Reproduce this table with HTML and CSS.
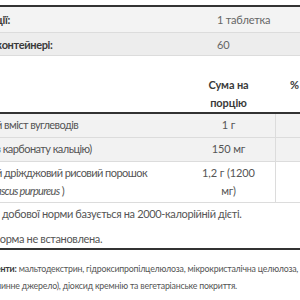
FILE: index.html
```html
<!DOCTYPE html>
<html lang="uk">
<head>
<meta charset="utf-8">
<link rel="stylesheet" href="styles.css">
</head>
<body>
<div class="page">
  <div class="serving">
    <div class="srow odd"><span class="slabel"><span class="cut">ц</span>ії:</span><span class="sval">1 таблетка</span></div>
    <div class="srow even"><span class="slabel"><span class="cut">к</span>онтейнері:</span><span class="sval">60</span></div>
  </div>

  <div class="facts">
    <div class="frow head">
      <div class="fl"></div>
      <div class="fa">Сума на порцію</div>
      <div class="fd">%</div>
    </div>
    <div class="frow r1">
      <div class="fl"><span class="cut">й</span> вміст вуглеводів</div>
      <div class="fa">1 г</div>
      <div class="fd"></div>
    </div>
    <div class="frow r2">
      <div class="fl"><span class="cut">з</span> карбонату кальцію)</div>
      <div class="fa">150 мг</div>
      <div class="fd"></div>
    </div>
    <div class="frow r3">
      <div class="fl"><span class="cut">й</span> дріжджовий рисовий порошок<br><span class="it"><span class="cut">a</span>scus purpureus</span> )</div>
      <div class="fa">1,2 г (1200 мг)</div>
      <div class="fd"></div>
    </div>
  </div>

  <div class="notes">
    <p class="n1">добової норми базується на 2000-калорійній дієті.</p>
    <p><span class="cut wide">н</span>орма не встановлена.</p>
  </div>

  <div class="other">
    <p><b><span class="cut">е</span>нти:</b> мальтодекстрин, гідроксипропілцелюлоза, мікрокристалічна целюлоза,<br><span class="cut">л</span>инне джерело), діоксид кремнію та вегетаріанське покриття.</p>
  </div>
</div>
</body>
</html>
```

FILE: styles.css
```css
html, body {
  margin: 0;
  padding: 0;
  background: #fff;
}
body {
  font-family: Lato, "Open Sans", sans-serif;
  color: #555;
  width: 300px;
  height: 300px;
  overflow: hidden;
  font-size: 11px;
  letter-spacing: -0.35px;
}
.page {
  padding-top: 5px;
}
.cut {
  display: inline-block;
  margin-left: -4px;
}
.cut.wide {
  margin-left: -6px;
}
.serving {
  border-top: 2px solid #333;
}
.srow {
  display: flex;
  align-items: center;
  border-bottom: 1px solid #dcdcdc;
}
.srow.odd {
  height: 25px;
  background: #f3f3f3;
}
.srow.even {
  height: 22px;
  background: #ededed;
}
.slabel {
  width: 217px;
  font-weight: 700;
  color: #3a3a3a;
  overflow: hidden;
  white-space: nowrap;
}
.sval {
  color: #666;
  letter-spacing: -0.2px;
}
.facts {
  margin-top: 20px;
  overflow: hidden;
}
.frow {
  display: grid;
  grid-template-columns: 182px 93px 1fr;
  line-height: 18px;
}
.frow.head {
  font-weight: 700;
  color: #3a3a3a;
  border-bottom: 2px solid #333;
}
.frow.head .fa {
  padding: 0 22px;
}
.frow.head .fd {
  padding-left: 15px;
}
.fl {
  white-space: nowrap;
  overflow: hidden;
  letter-spacing: -0.55px;
}
.fa {
  text-align: center;
  letter-spacing: -0.1px;
}
.r1 .fd, .r2 .fd, .r3 .fd {
  border-left: 1px solid #dcdcdc;
}
.r1, .r2 {
  background: #f2f2f2;
  border-bottom: 1px solid #dcdcdc;
}
.r1 > div, .r2 > div {
  padding: 2px 0 3px;
}
.r3 {
  background: #fff;
  border-bottom: 1px solid #dcdcdc;
}
.r3 > div {
  padding: 2px 0 2px;
}
.r3 .fa {
  padding-left: 17px;
  padding-right: 17px;
}
.it {
  font-style: italic;
  letter-spacing: -0.7px;
}
.notes {
  padding-top: 2px;
  border-bottom: 2px solid #333;
  line-height: 18px;
  overflow: hidden;
  white-space: nowrap;
}
.notes p {
  margin: 0 0 7px;
}
.notes p:last-child {
  margin-bottom: 0;
}
.notes .n1 {
  padding-left: 2px;
}
.other {
  padding-top: 10px;
  font-size: 8.8px;
  letter-spacing: -0.2px;
  line-height: 17px;
  overflow: hidden;
  white-space: nowrap;
}
.other p {
  margin: 0;
}
.other b {
  color: #3a3a3a;
}
```
